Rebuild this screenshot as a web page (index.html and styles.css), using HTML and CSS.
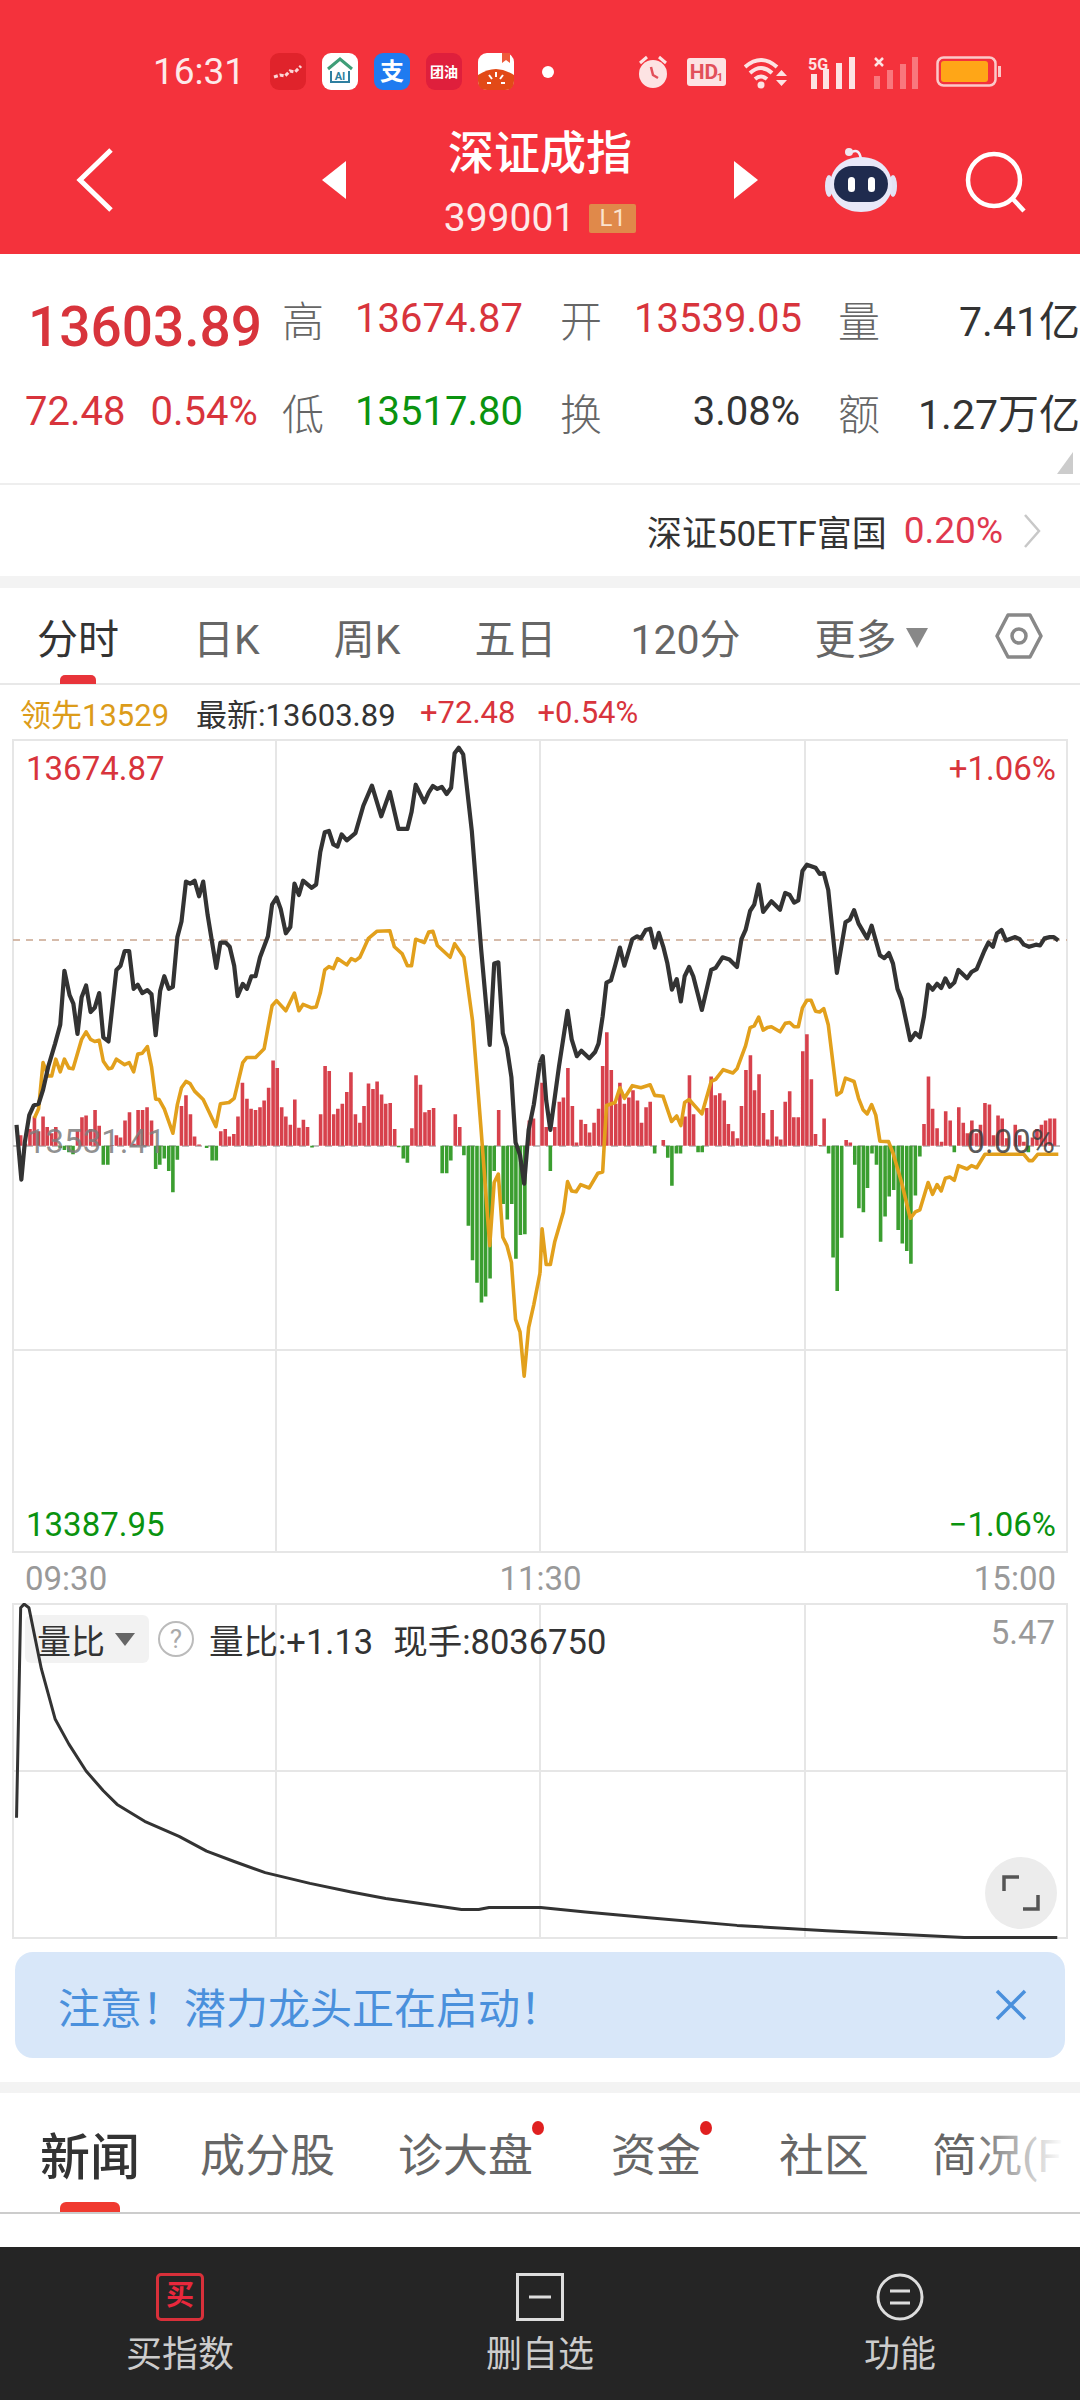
FILE: index.html
```html
<!DOCTYPE html>
<html lang="zh">
    <head>
        <meta charset="UTF-8" />
        <meta name="viewport" content="width=device-width, initial-scale=1.0" />
        <title>深证成指</title>
        <link rel="stylesheet" href="styles.css">
    </head>
    <body>
        <div class="page">
            <header class="head">
                <div class="status">
                    <span class="clock">16:31</span>
                    <div class="apps">
                        <svg width="36" height="37" viewBox="0 0 36 37"><rect width="36" height="37" rx="9" fill="#e0232b"/><path d="M4 24l6-2 5 1 5-5 5 1 6-6" fill="none" stroke="#fbd5d5" stroke-width="3" stroke-dasharray="4 2"/></svg>
                        <svg width="36" height="37" viewBox="0 0 36 37"><rect width="36" height="37" rx="9" fill="#fff"/><path d="M6 16L18 6l12 10" fill="none" stroke="#3f9e78" stroke-width="3"/><path d="M9 18v11h18V18" fill="none" stroke="#2f7fa0" stroke-width="2"/><text x="18" y="27" class="app-ai">AI</text></svg>
                        <svg width="36" height="37" viewBox="0 0 36 37"><rect width="36" height="37" rx="9" fill="#1f7bf0"/><text x="18" y="27" class="app-zhi">支</text></svg>
                        <svg width="36" height="37" viewBox="0 0 36 37"><rect width="36" height="37" rx="9" fill="#df1f3c"/><text x="18" y="24" class="app-tuan">团油</text></svg>
                        <svg width="36" height="37" viewBox="0 0 36 37"><rect width="36" height="37" rx="9" fill="#fff"/><path d="M0 22q18-12 36 0v6q0 9-9 9H9q-9 0-9-9z" fill="#e24a17"/><path d="M24 0h8v10l-4-3-4 3z" fill="#ee5a3a"/><path d="M18 19v5M11 22l3 4M25 22l-3 4M9 30h4M23 30h4" stroke="#fff" stroke-width="2" fill="none"/></svg>
                    </div>
                    <span class="status-dot"></span>
                    <div class="sys">
                        <svg width="32" height="34" viewBox="0 0 32 34"><circle cx="16" cy="19" r="14" fill="#fde3e3"/><path d="M3 8l7-6M29 8l-7-6" stroke="#fde3e3" stroke-width="3"/><path d="M14 12l2 8 5 3" fill="none" stroke="#e2505a" stroke-width="2.500"/></svg>
                        <svg width="39" height="28" viewBox="0 0 39 28"><rect width="39" height="28" rx="3" fill="#fde3e3"/><text x="17" y="21" class="sys-hd">HD</text><text x="33" y="23" class="sys-one">1</text></svg>
                        <svg width="46" height="34" viewBox="0 0 46 34"><path d="M1 12q16-14 32 0M6 18q11-10 22 0M11 24q6-5 12 0" fill="none" stroke="#fde3e3" stroke-width="4"/><circle cx="17" cy="30" r="3.500" fill="#fde3e3"/><path d="M32 21h11l-5.500-6zM32 25h11l-5.500 6z" fill="#fde3e3"/></svg>
                        <svg width="48" height="34" viewBox="0 0 48 34"><text x="0" y="15" class="sys-5g">5G</text><rect x="3" y="19" width="6" height="15" fill="#fde3e3"/><rect x="15" y="14" width="6" height="20" fill="#fde3e3"/><rect x="28" y="8" width="6" height="26" fill="#fde3e3"/><rect x="41" y="2" width="6" height="32" fill="#fde3e3"/></svg>
                        <svg width="44" height="34" viewBox="0 0 44 34"><path d="M1 3l8 8M9 3l-8 8" stroke="#fde3e3" stroke-width="2.500"/><rect x="0" y="21" width="6" height="13" fill="#f9777d"/><rect x="13" y="15" width="6" height="19" fill="#f9777d"/><rect x="26" y="9" width="6" height="25" fill="#f9777d"/><rect x="38" y="2" width="6" height="32" fill="#f9777d"/></svg>
                        <svg width="66" height="31" viewBox="0 0 66 31"><rect x="1.500" y="1.500" width="58" height="28" rx="6" fill="none" stroke="#fbc9c9" stroke-width="2.500"/><rect x="5" y="5" width="47" height="21" rx="3" fill="#ffa617"/><rect x="62" y="10" width="3" height="11" fill="#fbc9c9"/></svg>
                    </div>
                </div>
                <div class="nav">
                    <svg class="back" width="38" height="64" viewBox="0 0 38 64"><path d="M35 2L4 32l31 30" fill="none" stroke="#fff" stroke-width="5"/></svg>
                    <div class="nav-mid">
                        <span class="tri tri-left"></span>
                        <div class="nav-title">
                            <div class="title">深证成指</div>
                            <div class="code">399001<span class="level">L1</span></div>
                        </div>
                        <span class="tri tri-right"></span>
                    </div>
                    <svg class="robot" width="72" height="66" viewBox="0 0 72 66"><path d="M27 5q7-4 9 7" fill="none" stroke="#f0eefa" stroke-width="2.500"/><circle cx="24" cy="5" r="4" fill="#f0e6ee"/><ellipse cx="4" cy="39" rx="4" ry="11" fill="#e3e3f5"/><ellipse cx="68" cy="39" rx="4" ry="11" fill="#e3e3f5"/><path d="M36 10c20 0 31 14 31 28 0 16-14 27-31 27S5 54 5 38C5 24 16 10 36 10z" fill="#e8e8f8"/><rect x="9" y="19" width="54" height="36" rx="18" fill="#1f2b4e"/><rect x="23" y="30" width="7" height="15" rx="3.500" fill="#fff"/><rect x="43" y="30" width="7" height="15" rx="3.500" fill="#fff"/></svg>
                    <svg class="search" width="62" height="62" viewBox="0 0 62 62"><circle cx="29" cy="29" r="26" fill="none" stroke="#fff" stroke-width="4.500"/><path d="M47 47l12 13" stroke="#fff" stroke-width="4.500"/></svg>
                </div>
            </header>

            <section class="quote">
                <div class="q-price up">13603.89</div>
                <div class="q-label">高</div>
                <div class="q-val up">13674.87</div>
                <div class="q-label">开</div>
                <div class="q-val up">13539.05</div>
                <div class="q-label">量</div>
                <div class="q-val q-last">7.41亿</div>

                <div class="q-change up"><span>72.48</span><span>0.54%</span></div>
                <div class="q-label">低</div>
                <div class="q-val down">13517.80</div>
                <div class="q-label">换</div>
                <div class="q-val">3.08%</div>
                <div class="q-label">额</div>
                <div class="q-val q-last">1.27万亿</div>
                <span class="corner"></span>
            </section>

            <div class="etf">
                <span class="etf-name">深证50ETF富国</span>
                <span class="etf-pct">0.20%</span>
                <svg width="20" height="36" viewBox="0 0 20 36"><path d="M3 2l14 16L3 34" fill="none" stroke="#c8c8c8" stroke-width="2.500"/></svg>
            </div>

            <nav class="periods">
                <a class="period active">分时</a>
                <a class="period">日K</a>
                <a class="period">周K</a>
                <a class="period">五日</a>
                <a class="period">120分</a>
                <a class="period">更多<i class="more-tri"></i></a>
                <svg class="hex" width="48" height="48" viewBox="0 0 48 48"><path d="M13 3h22l11 21-11 21H13L2 24z" fill="none" stroke="#888" stroke-width="3.500" stroke-linejoin="round"/><circle cx="24" cy="24" r="7" fill="none" stroke="#888" stroke-width="3.500"/></svg>
            </nav>

            <div class="info">
                <span class="lead">领先13529</span>
                <span class="info-new">最新:13603.89</span>
                <span class="up">+72.48</span>
                <span class="up">+0.54%</span>
            </div>

            <div class="chart">
                <svg width="1080" height="815" viewBox="0 739 1080 815">
                    <g class="grid">
                        <rect x="13" y="740" width="1054" height="812"/>
                        <path d="M276 740V1552M540 740V1552M805 740V1552M13 1350H1067"/>
                    </g>
                    <path class="dash-tan" d="M13 940H1067"/>
                    <path class="dash-gray" d="M13 1146H1062"/>

                    <!-- 坐标按 540x660 的半屏取点 -->
                    <g transform="translate(0 730) scale(.34439 .42092)">
                        <path class="bar red" d="M60 988v-25M74 988v-5M87 988v-40M100 988v-70M112 988v-35M125 988v-70M137 988v-45M150 988v-30M162 988v-45M225 988v-35M238 988v-68M250 988v-72M263 988v-40M276 988v-85M288 988v-48M325 988v-2M338 988v-25M350 988v-20M363 988v-60M376 988v-80M389 988v-5M401 988v-85M414 988v-85M427 988v-92M440 988v-60M527 988v-95M540 988v-120M553 988v-75M565 988v-22M578 988v-3M641 988v-35M654 988v-40M666 988v-22M679 988v-28M691 988v-70M704 988v-150M717 988v-112M729 988v-88M742 988v-85M755 988v-92M767 988v-108M780 988v-138M793 988v-203M805 988v-185M818 988v-92M830 988v-70M843 988v-50M856 988v-110M868 988v-43M881 988v-62M893 988v-45M931 988v-75M944 988v-190M956 988v-178M969 988v-75M981 988v-88M994 988v-100M1007 988v-128M1019 988v-175M1032 988v-75M1045 988v-55M1057 988v-95M1070 988v-148M1083 988v-135M1095 988v-153M1108 988v-122M1120 988v-100M1133 988v-102M1146 988v-40M1196 988v-42M1208 988v-168M1221 988v-145M1234 988v-80M1246 988v-85M1259 988v-90M1322 988v-75M1335 988v-45M1448 988v-85M1537 988v-60M1549 988v-65"/>
                        <path class="bar green" d="M175 988v5M187 988v10M200 988v15M212 988v20M300 988v45M313 988v45M452 988v55M464 988v45M477 988v30M490 988v60M502 988v110M515 988v33M600 988v5M616 988v35M628 988v35M906 988v4M1158 988v3M1171 988v30M1183 988v40M1284 988v65M1297 988v65M1309 988v35M1347 988v22M1360 988v190M1372 988v272M1385 988v325M1398 988v372M1410 988v358M1423 988v315M1435 988v60M1461 988v138M1473 988v175M1486 988v138M1498 988v268M1511 988v212M1524 988v210"/>
                        <polyline class="line-gold" points="100,922 112,900 125,790 140,822 150,822 162,782 175,812 187,782 200,803 212,805 237,735 250,717 263,735 275,740 288,737 300,787 315,805 325,803 338,782 362,795 375,790 388,812 400,770 413,768 428,752 440,800 452,877 462,878 477,900 502,958 515,890 527,850 540,835 552,840 565,858 590,878 627,942 640,888 665,885 680,875 705,790 717,778 742,778 767,757 790,655 803,643 830,667 855,625 868,667 880,652 905,660 918,658 930,625 943,570 955,562 968,567 980,543 1007,558 1020,543 1032,548 1045,540 1070,495 1095,478 1132,477 1145,515 1168,532 1183,560 1195,560 1207,497 1232,505 1245,480 1257,478 1270,512 1307,540 1320,508 1347,540 1372,690 1397,950 1422,1225 1435,1075 1447,1055 1460,1205 1472,1225 1485,1265 1497,1400 1510,1430 1522,1535 1535,1420 1550,1365 1568,1290"/>
                        <polyline class="line-black" points="48,938 62,1068 72,980 85,915 98,892 112,888 125,855 140,800 160,745 175,700 187,572 202,630 213,650 225,722 237,635 250,607 263,670 275,660 288,625 300,730 315,740 338,570 350,560 362,525 375,525 388,615 400,605 413,625 428,618 440,628 452,725 465,620 477,585 490,615 502,610 515,492 527,455 540,360 552,365 565,358 578,395 590,360 603,440 628,565 640,505 655,505 667,515 680,560 690,632 705,603 717,615 730,585 742,585 755,540 778,490 790,415 803,398 815,425 830,483 843,468 855,365 868,392 880,358 905,375 918,367 930,290 943,243 955,240 968,272 980,277 992,248 1007,262 1032,245 1055,180 1080,132 1107,205 1132,147 1157,235 1183,235 1195,195 1207,130 1232,172 1245,148 1257,133 1270,140 1283,135 1297,152 1310,137 1320,55 1332,42 1345,58 1370,240 1397,520 1422,748 1435,555 1447,552 1460,720 1472,755 1485,825 1497,980 1510,1010 1522,1078 1535,950 1550,890 1568,790"/>
                    </g>
                    <g transform="translate(540 730) scale(.34439 .42092)">
                        <path class="bar red" d="M6 988v-150M18 988v-45M43 988v-45M56 988v-105M68 988v-115M81 988v-185M94 988v-95M106 988v-8M119 988v-62M132 988v-52M144 988v-32M157 988v-55M170 988v-88M182 988v-190M194 988v-270M207 988v-180M220 988v-100M232 988v-150M245 988v-100M258 988v-115M270 988v-132M283 988v-108M295 988v-55M308 988v-92M320 988v-105M358 988v-14M421 988v-70M434 988v-168M446 988v-75M484 988v-90M497 988v-165M509 988v-120M522 988v-125M535 988v-108M547 988v-52M560 988v-35M573 988v-18M585 988v-95M598 988v-180M611 988v-215M623 988v-132M636 988v-170M649 988v-78M661 988v-15M674 988v-85M687 988v-22M699 988v-15M712 988v-105M725 988v-130M737 988v-68M750 988v-68M763 988v-225M775 988v-265M788 988v-158M800 988v-28M813 988v-2M825 988v-65M889 988v-14M901 988v-8M1115 988v-52M1128 988v-165M1140 988v-88M1153 988v-42M1166 988v-10M1178 988v-82M1191 988v-60M1216 988v-92M1229 988v-55M1241 988v-30M1254 988v-60M1267 988v-30M1279 988v-50M1292 988v-102M1305 988v-98M1317 988v-25M1330 988v-72M1342 988v-65M1355 988v-18M1380 988v-50M1393 988v-25M1405 988v-10M1430 988v-20M1443 988v-40M1456 988v-50M1468 988v-60M1481 988v-65M1494 988v-65"/>
                        <path class="bar green" d="M30 988v60M333 988v18M371 988v28M383 988v95M396 988v18M408 988v18M459 988v15M471 988v15M838 988v18M851 988v265M863 988v345M876 988v218M914 988v45M926 988v148M939 988v158M951 988v100M964 988v18M977 988v45M989 988v228M1002 988v168M1014 988v120M1027 988v105M1040 988v200M1052 988v232M1065 988v250M1077 988v280M1090 988v118M1103 988v25M1203 988v15M1418 988v15"/>
                        <polyline class="line-gold" points="0,1290 6,1185 18,1270 30,1270 43,1215 68,1145 80,1073 92,1095 105,1097 118,1080 143,1088 168,1053 182,1050 193,892 218,885 232,850 245,875 268,845 293,850 320,843 333,868 357,870 382,930 397,917 409,940 420,885 433,878 470,912 497,835 510,830 532,807 560,815 572,805 597,750 610,707 622,703 635,682 648,713 660,707 672,705 697,717 712,697 725,695 738,705 750,705 762,660 775,642 787,642 800,668 812,670 824,662 837,700 862,867 875,860 887,827 912,835 925,875 938,902 950,912 963,890 975,915 987,977 1012,978 1025,1005 1050,1075 1075,1160 1090,1145 1103,1140 1127,1075 1140,1103 1153,1080 1165,1095 1177,1065 1190,1062 1203,1070 1215,1035 1240,1043 1253,1035 1268,1040 1292,1008 1405,1008 1420,1023 1430,1023 1445,1008 1505,1008"/>
                        <polyline class="line-black" points="0,790 8,775 18,880 30,950 55,800 80,667 92,735 107,775 120,762 143,780 160,765 170,745 182,680 193,600 206,595 218,560 232,517 245,560 268,497 282,490 293,495 307,475 320,472 333,517 345,482 358,515 370,555 383,617 397,592 409,645 420,585 433,563 445,585 470,665 497,570 510,565 530,540 550,545 572,563 585,497 597,475 610,430 622,415 635,367 648,432 672,407 697,427 712,387 725,392 738,410 750,405 762,335 775,320 800,327 812,342 824,340 837,380 862,577 887,457 900,450 912,428 925,460 950,495 963,465 987,535 1000,542 1013,530 1025,555 1038,615 1050,640 1075,737 1090,720 1103,730 1115,680 1127,605 1140,617 1153,603 1165,613 1177,590 1190,610 1203,600 1215,570 1240,590 1253,575 1268,568 1290,525 1302,505 1315,515 1327,483 1340,475 1353,500 1380,492 1393,497 1405,510 1420,515 1440,510 1452,512 1465,495 1480,492 1492,492 1505,500"/>
                    </g>
                </svg>
                <span class="c-label c-tl up">13674.87</span>
                <span class="c-label c-tr up">+1.06%</span>
                <span class="c-label c-ml">13531.41</span>
                <span class="c-label c-mr">0.00%</span>
                <span class="c-label c-bl down">13387.95</span>
                <span class="c-label c-br down">−1.06%</span>
            </div>

            <div class="axis">
                <span>09:30</span>
                <span>11:30</span>
                <span>15:00</span>
            </div>

            <div class="sub">
                <svg width="1080" height="337" viewBox="0 1603 1080 337">
                    <g class="grid">
                        <rect x="13" y="1604" width="1054" height="334"/>
                        <path d="M276 1604V1938M540 1604V1938M805 1604V1938M13 1771H1067"/>
                    </g>
                    <g transform="translate(0 1500) scale(.68878 .35897)">
                        <polyline class="line-ratio" points="24,885 30,300 35,290 42,300 60,470 80,610 100,680 125,755 150,810 170,848 210,895 260,937 300,978 340,1007 385,1038 450,1068 510,1092 560,1110 620,1127 670,1141 695,1141 710,1135 785,1135 850,1148 950,1165 1070,1185 1200,1200 1400,1219 1535,1219"/>
                    </g>
                </svg>
                <div class="sub-head">
                    <span class="sub-pick">量比<i class="pick-tri"></i></span>
                    <span class="sub-help">?</span>
                    <span class="sub-text">量比:+1.13</span>
                    <span class="sub-text">现手:8036750</span>
                </div>
                <span class="sub-max">5.47</span>
                <span class="expand">
                    <svg width="38" height="38" viewBox="0 0 38 38"><path d="M2 17V3h15M36 21v14H21" fill="none" stroke="#555" stroke-width="3.500"/></svg>
                </span>
            </div>

            <div class="notice">
                <span>注意！潜力龙头正在启动！</span>
                <svg width="32" height="32" viewBox="0 0 32 32"><path d="M2 2l28 28M30 2L2 30" stroke="#4a90dc" stroke-width="3.500"/></svg>
            </div>

            <nav class="tabs">
                <a class="tab active">新闻</a>
                <a class="tab">成分股</a>
                <a class="tab dot">诊大盘</a>
                <a class="tab dot">资金</a>
                <a class="tab">社区</a>
                <a class="tab">简况(F10)</a>
                <span class="tabs-fade"></span>
            </nav>

            <div class="gap"></div>

            <footer class="bottom">
                <a class="bottom-item">
                    <span class="buy-box">买</span>
                    <span>买指数</span>
                </a>
                <a class="bottom-item">
                    <svg width="48" height="48" viewBox="0 0 48 48"><rect x="1.500" y="1.500" width="45" height="45" fill="none" stroke="#ddd" stroke-width="3"/><path d="M13 24h22" stroke="#ddd" stroke-width="3"/></svg>
                    <span>删自选</span>
                </a>
                <a class="bottom-item">
                    <svg width="48" height="48" viewBox="0 0 48 48"><circle cx="24" cy="24" r="22" fill="none" stroke="#ddd" stroke-width="3"/><path d="M14 18h20M14 30h20" stroke="#ddd" stroke-width="3"/></svg>
                    <span>功能</span>
                </a>
            </footer>
        </div>
    </body>
</html>
```

FILE: styles.css
```css
* {
    box-sizing: border-box;
}
html,
body {
    margin: 0;
    background: #fff;
}
body {
    font-family: Roboto, "Noto Sans CJK SC", sans-serif;
    color: #333;
}
svg {
    display: block;
}
.page {
    width: 1080px;
    height: 2400px;
    overflow: hidden;
}
.up {
    color: #d8343c;
}
.down {
    color: #0a930f;
}

/* 顶部 */
.head {
    height: 254px;
    padding-top: 53px;
    background: #f4323c;
    color: #fff;
}
.status {
    display: flex;
    align-items: center;
    height: 37px;
    padding-left: 153px;
}
.clock {
    font-size: 37px;
    width: 117px;
    color: #fde9e9;
    white-space: nowrap;
}
.apps {
    display: flex;
    gap: 16px;
}
.app-ai {
    font: 700 11px Roboto, sans-serif;
    fill: #2f7fa0;
    text-anchor: middle;
}
.app-zhi {
    font: 700 24px "Noto Sans CJK SC", sans-serif;
    fill: #fff;
    text-anchor: middle;
}
.app-tuan {
    font: 700 14px "Noto Sans CJK SC", sans-serif;
    fill: #fff;
    text-anchor: middle;
}
.status-dot {
    width: 12px;
    height: 12px;
    margin-left: 28px;
    border-radius: 50%;
    background: #fff;
}
.sys {
    display: flex;
    align-items: center;
    gap: 18px;
    margin-left: 83px;
}
.sys-hd {
    font: 700 21px Roboto, sans-serif;
    fill: #e2505a;
    text-anchor: middle;
}
.sys-one {
    font: 700 11px Roboto, sans-serif;
    fill: #e2505a;
    text-anchor: middle;
}
.sys-5g {
    font: 700 16px Roboto, sans-serif;
    fill: #fde3e3;
}
.nav {
    display: flex;
    align-items: center;
    height: 130px;
    margin-top: 25px;
    padding-left: 76px;
}
.nav-mid {
    display: flex;
    align-items: center;
    justify-content: space-between;
    width: 436px;
    margin-left: 208px;
}
.tri {
    width: 0;
    height: 0;
    border-top: 19px solid transparent;
    border-bottom: 19px solid transparent;
}
.tri-left {
    border-right: 24px solid #fff;
}
.tri-right {
    border-left: 24px solid #fff;
}
.nav-title {
    padding-top: 6px;
    text-align: center;
}
.title {
    font-size: 46px;
    line-height: 60px;
    font-weight: 500;
}
.code {
    display: flex;
    align-items: center;
    justify-content: center;
    gap: 14px;
    font-size: 39px;
    line-height: 50px;
    margin-top: 10px;
    color: #fdeaea;
}
.level {
    width: 47px;
    height: 29px;
    line-height: 29px;
    font-size: 24px;
    text-align: center;
    border-radius: 2px;
    background: #e0894a;
    color: #fbe3cf;
}
.robot {
    margin-left: 67px;
}
.search {
    margin-left: 68px;
    margin-top: 4px;
}

/* 行情 */
.quote {
    position: relative;
    display: grid;
    grid-template-columns: 282px 73px 205px 74px 204px 42px 1fr;
    grid-template-rows: 88px 98px;
    align-items: center;
    height: 231px;
    padding-top: 20px;
    border-bottom: 2px solid #eee;
}
.q-price {
    margin-top: 18px;
    padding-left: 28px;
    font-size: 55px;
    font-weight: 500;
    white-space: nowrap;
}
.q-change {
    display: flex;
    gap: 25px;
    padding-left: 25px;
    font-size: 40px;
    white-space: nowrap;
}
.q-label {
    font-size: 42px;
    color: #666;
    font-weight: 300;
}
.q-val {
    padding-right: 38px;
    font-size: 40px;
    text-align: right;
    white-space: nowrap;
}
.q-last {
    padding-right: 0;
    font-size: 41px;
}
.corner {
    position: absolute;
    right: 7px;
    bottom: 9px;
    width: 0;
    height: 0;
    border-left: 16px solid transparent;
    border-bottom: 22px solid #ccc;
}
.etf {
    display: flex;
    align-items: center;
    justify-content: flex-end;
    height: 103px;
    padding-right: 38px;
    border-bottom: 12px solid #f3f3f3;
}
.etf-name {
    font-size: 35px;
}
.etf-pct {
    margin: 0 19px 0 17px;
    font-size: 37px;
    color: #e0384e;
}

/* 周期 */
.periods {
    display: flex;
    align-items: center;
    gap: 74px;
    height: 97px;
    padding-left: 37px;
    border-bottom: 2px solid #e8e8e8;
}
.period {
    position: relative;
    font-size: 41px;
    color: #666;
    white-space: nowrap;
}
.period.active {
    color: #333;
}
.period.active::after {
    content: "";
    position: absolute;
    left: 23px;
    bottom: -18px;
    width: 36px;
    height: 9px;
    border-radius: 5px 5px 0 0;
    background: #e8343a;
}
.more-tri {
    display: inline-block;
    margin-left: 9px;
    vertical-align: 6px;
    border-left: 11px solid transparent;
    border-right: 11px solid transparent;
    border-top: 20px solid #888;
}
.hex {
    margin-left: -7px;
}
.info {
    display: flex;
    align-items: center;
    height: 54px;
    padding-left: 20px;
    font-size: 31px;
}
.lead {
    width: 176px;
    color: #dc9c1a;
}
.info-new {
    width: 224px;
}
.info .up + .up {
    margin-left: 22px;
}

/* 分时图 */
.chart,
.sub {
    position: relative;
}
.grid {
    fill: none;
    stroke: #e6e6e6;
    stroke-width: 2;
}
.dash-tan {
    stroke: #c9a58e;
    stroke-width: 1.500;
    stroke-dasharray: 7 6;
}
.dash-gray {
    stroke: #aaa;
    stroke-width: 1.500;
    stroke-dasharray: 7 6;
}
.bar {
    fill: none;
    stroke-width: 3.600;
    vector-effect: non-scaling-stroke;
}
.bar.red {
    stroke: #d7414c;
}
.bar.green {
    stroke: #3b9e30;
}
.line-black,
.line-gold,
.line-ratio {
    fill: none;
    stroke-linejoin: round;
    vector-effect: non-scaling-stroke;
}
.line-black {
    stroke: #333;
    stroke-width: 4.200;
}
.line-gold {
    stroke: #e2a01c;
    stroke-width: 3.600;
}
.line-ratio {
    stroke: #333;
    stroke-width: 3;
}
.c-label {
    position: absolute;
    font-size: 33px;
    line-height: 40px;
}
.c-tl {
    left: 26px;
    top: 10px;
}
.c-tr {
    right: 24px;
    top: 10px;
}
.c-ml {
    left: 27px;
    top: 383px;
    color: rgba(125, 125, 125, 0.85);
}
.c-mr {
    right: 25px;
    top: 383px;
    color: rgba(60, 60, 60, 0.85);
}
.c-bl {
    left: 26px;
    bottom: 9px;
}
.c-br {
    right: 24px;
    bottom: 9px;
}
.axis {
    display: flex;
    justify-content: space-between;
    align-items: center;
    height: 49px;
    padding: 0 24px 0 25px;
    font-size: 33px;
    color: #999;
}
.sub-head {
    position: absolute;
    left: 25px;
    top: 11px;
    display: flex;
    align-items: center;
}
.sub-pick {
    display: flex;
    align-items: center;
    width: 124px;
    height: 48px;
    padding-left: 12px;
    font-size: 34px;
    background: rgba(0, 0, 0, 0.05);
    border-radius: 6px;
}
.pick-tri {
    margin-left: 10px;
    border-left: 10px solid transparent;
    border-right: 10px solid transparent;
    border-top: 13px solid #666;
}
.sub-help {
    width: 36px;
    height: 36px;
    margin: 0 15px 0 9px;
    border: 2px solid #bbb;
    border-radius: 50%;
    font-size: 26px;
    line-height: 32px;
    text-align: center;
    color: #aaa;
}
.sub-text {
    margin-right: 20px;
    font-size: 34.500px;
}
.sub-max {
    position: absolute;
    right: 25px;
    top: 10px;
    font-size: 33px;
    color: #999;
}
.expand {
    position: absolute;
    left: 985px;
    top: 254px;
    display: flex;
    align-items: center;
    justify-content: center;
    width: 72px;
    height: 72px;
    border-radius: 50%;
    background: #ececec;
}

/* 提示条 */
.notice {
    display: flex;
    align-items: center;
    justify-content: space-between;
    width: 1050px;
    height: 106px;
    margin: 12px 15px 24px;
    padding: 0 38px 0 43px;
    border-radius: 18px;
    background: #d8e7f9;
    font-size: 42px;
    color: #4a90dc;
}

/* 新闻标签 */
.tabs {
    position: relative;
    display: flex;
    align-items: center;
    gap: 63px;
    height: 132px;
    padding: 0 0 0 40px;
    overflow: hidden;
    border-top: 11px solid #f3f3f3;
    border-bottom: 2px solid #ccc;
}
.tab {
    position: relative;
    font-size: 45px;
    color: #666;
    white-space: nowrap;
}
.tab.active {
    margin-right: -3px;
    font-size: 50px;
    color: #333;
    font-weight: 500;
}
.tab.active::after {
    content: "";
    position: absolute;
    left: 20px;
    bottom: -25px;
    width: 60px;
    height: 12px;
    border-radius: 6px 6px 0 0;
    background: #f03a30;
}
.tab.dot {
    margin-right: 15px;
}
.tab.dot::after {
    content: "";
    position: absolute;
    right: -11px;
    top: 1px;
    width: 12px;
    height: 14px;
    border-radius: 50%;
    background: #e02020;
}
.tabs-fade {
    position: absolute;
    right: 0;
    top: 0;
    bottom: 0;
    width: 110px;
    background: linear-gradient(to right, rgba(255, 255, 255, 0), #fff 85%);
}
.gap {
    height: 33px;
}

/* 底栏 */
.bottom {
    display: flex;
    height: 153px;
    background: #252525;
}
.bottom-item {
    flex: 1;
    display: flex;
    flex-direction: column;
    align-items: center;
    justify-content: flex-start;
    gap: 9px;
    padding-top: 26px;
    font-size: 36px;
    line-height: 50px;
    color: #ccc;
}
.buy-box {
    width: 48px;
    height: 48px;
    border: 3px solid #d8303a;
    border-radius: 5px;
    font-size: 28px;
    line-height: 40px;
    font-weight: 700;
    text-align: center;
    color: #e8283c;
}
```
